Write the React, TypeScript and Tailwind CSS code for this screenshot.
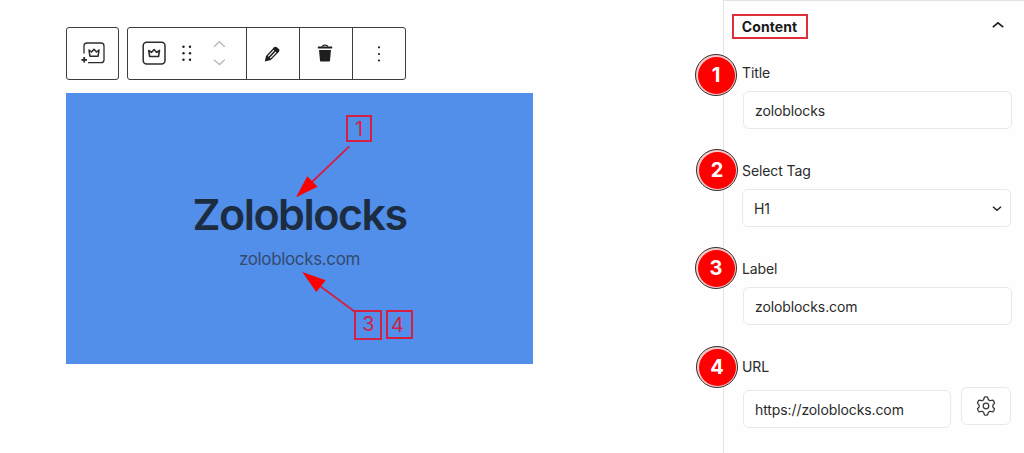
import React from 'react';

interface FieldProps {
  step: number;
  label: string;
  className?: string;
  badgeClassName?: string;
  children: React.ReactNode;
}

const Crown: React.FC = () => (
  <path d="M-5 -3 L-2.5 -1 L0 -3.8 L2.5 -1 L5 -3 L4.1 3.2 H-4.1 Z" strokeWidth="1.5" strokeLinejoin="round" />
);

const Field: React.FC<FieldProps> = ({ step, label, className = '', badgeClassName = '-left-[47px]', children }) => (
  <div className={`relative ${className}`}>
    <span
      className={`absolute -top-[9px] flex h-[42px] w-[42px] items-center justify-center rounded-full border border-[#3a2a2c] bg-[#f4c9c9] p-[1.5px] ${badgeClassName}`}
    >
      <span className="flex h-full w-full items-center justify-center rounded-full bg-[#fe0000] text-[20px] font-bold text-white">
        {step}
      </span>
    </span>
    <label className="block h-5 text-[14px] leading-5 tracking-[-0.1px] text-[#2b2b2b]">{label}</label>
    {children}
  </div>
);

const inputClass =
  'flex h-[38px] items-center rounded-md border border-[#e8e8ea] bg-white px-[11px] text-[14px] tracking-[-0.1px] text-[#2b2b2b]';

const Toolbar: React.FC = () => (
  <div className="flex gap-[8px]">
    <div className="flex h-[53px] w-[53px] items-center justify-center rounded-[3px] border border-[#3c3c3c]">
      <svg className="-mr-px mb-px" width="26" height="26" viewBox="0 0 26 26" fill="none" stroke="#2c2c2c" strokeWidth="1.3">
        <path d="M4 13.5 V6 a3 3 0 0 1 3-3 H21 a3 3 0 0 1 3 3 V19.7 a3 3 0 0 1-3 3 H8" />
        <path d="M4.2 17 V22.6 M1.4 19.8 H7" strokeWidth="1.8" />
        <g transform="translate(14 13)">
          <Crown />
        </g>
      </svg>
    </div>
    <div className="flex h-[53px] w-[279px] rounded-[3px] border border-[#3c3c3c]">
      <div className="w-[118px]">
        <svg width="118" height="51" viewBox="0 0 118 51" fill="none">
          <g stroke="#2c2c2c" strokeWidth="1.5">
            <rect x="15.2" y="14.3" width="21.8" height="21.8" rx="3.5" />
            <g transform="translate(26.1 25.4) scale(1.08 1)">
              <Crown />
            </g>
          </g>
          <g fill="#1e1e1e">
            {[18.7, 25.2, 31.7].map((y) => (
              <React.Fragment key={y}>
                <circle cx="55.5" cy={y} r="1.2" />
                <circle cx="62" cy={y} r="1.2" />
              </React.Fragment>
            ))}
          </g>
          <path d="M86 18.8 L91.4 13.8 L96.8 18.8 M86 31.7 L91.4 36.5 L96.8 31.7" stroke="#b9b9b9" strokeWidth="1.4" />
        </svg>
      </div>
      <div className="flex w-[53px] items-center justify-center border-l border-[#3c3c3c]">
        <svg className="mr-[2px]" width="18" height="18" viewBox="0 0 18 18">
          <path d="M1.8 16.4 L3 11 L10.8 2.4 Q12.3 1 13.9 2.2 L15.9 3.9 Q17.1 5.2 16 6.7 L7.8 15 Z" fill="#1e1e1e" />
          <path d="M5.2 11.4 L11 5.2 M7.2 13.2 L13 7" stroke="#fff" strokeWidth="1.1" />
        </svg>
      </div>
      <div className="flex w-[53px] items-center justify-center border-l border-[#3c3c3c]">
        <svg className="mr-[2px] mb-px" width="16" height="18" viewBox="0 0 16 18" fill="#1e1e1e">
          <path d="M5 2.8 a3.1 2.3 0 0 1 6 0" fill="none" stroke="#1e1e1e" strokeWidth="1.1" />
          <rect x="0.8" y="2.6" width="14.4" height="1.9" rx="0.5" />
          <path d="M2 5.9 H14 L13 16.4 Q12.8 17.6 11.6 17.6 H4.4 Q3.2 17.6 3 16.4 Z" />
        </svg>
      </div>
      <div className="flex flex-1 items-center justify-center border-l border-[#3c3c3c]">
        <svg width="4" height="18" viewBox="0 0 4 18" fill="#1e1e1e">
          <circle cx="2" cy="2.3" r="1.1" />
          <circle cx="2" cy="9" r="1.1" />
          <circle cx="2" cy="15.5" r="1.1" />
        </svg>
      </div>
    </div>
  </div>
);

const markerClass = 'absolute flex items-center justify-center border-2 border-[#d31f42] text-[20px] leading-none text-[#d31f42]';

const Preview: React.FC = () => (
  <div className="relative mt-[13px] flex h-[271px] w-[467px] flex-col items-center bg-[#528fea]">
    <h1 className="mt-[97px] text-[43px] leading-[48px] font-semibold tracking-[-1.5px] text-[#1c2d42]">Zoloblocks</h1>
    <p className="mt-[9px] text-[17px] leading-6 tracking-[-0.35px] text-[#344a70]">zoloblocks.com</p>

    <svg className="absolute inset-0" width="467" height="271" viewBox="0 0 467 271">
      <g stroke="#d31f42" strokeWidth="1.8">
        <path d="M283.3 53.3 L246 89" />
        <path d="M288.5 218.5 L254 193" />
      </g>
      <g fill="#fe0000">
        <path d="M230 104.2 L241.3 83.3 L251.6 93.8 Z" />
        <path d="M236.3 179 L259.6 187.3 L250.3 199 Z" />
      </g>
    </svg>
    <span className={`${markerClass} top-[22px] left-[280px] h-[27px] w-[26px]`}>1</span>
    <span className={`${markerClass} top-[217px] left-[288px] h-[30px] w-[28px] pb-[2px] pl-px`}>3</span>
    <span className={`${markerClass} top-[217px] left-[320px] h-[29px] w-[27px] pr-[4px]`}>4</span>
  </div>
);

const Sidebar: React.FC = () => (
  <aside className="w-[301px] border-t border-l border-[#e2e2e2] bg-[#fefefe] pr-3 pl-[18px]">
    <div className="mt-[13px] -ml-[10px] flex items-center justify-between pr-[7px]">
      <h2 className="flex h-[25px] w-[76px] items-center justify-center border-2 border-[#dc2f38] text-[14px] font-bold text-[#1a1a1a]">
        <span className="-ml-px tracking-[0.1px]">Content</span>
      </h2>
      <svg className="mb-[3px]" width="13" height="8" viewBox="0 0 13 8" fill="none" stroke="#1e1e1e" strokeWidth="1.7">
        <path d="M0.8 6.2 L6 1.8 L11.2 6.2" />
      </svg>
    </div>

    <Field step={1} label="Title" className="mt-6">
      <div className={`${inputClass} mt-2 ml-px`}>zoloblocks</div>
    </Field>

    <Field step={2} label="Select Tag" className="mt-8" badgeClassName="-left-[46px] mt-[-3px]">
      <div className={`${inputClass} mt-2 mr-px justify-between`}>
        H1
        <svg className="-mr-[3px]" width="10" height="7" viewBox="0 0 10 7" fill="none" stroke="#1e1e1e" strokeWidth="1.4">
          <path d="M1 1.8 L5 5.3 L9 1.8" />
        </svg>
      </div>
    </Field>

    <Field step={3} label="Label" className="mt-8" badgeClassName="-left-[47px] mt-[-3px]">
      <div className={`${inputClass} mt-2 ml-px`}>zoloblocks.com</div>
    </Field>

    <Field step={4} label="URL" className="mt-8" badgeClassName="-left-[46px] mt-[-2px]">
      <div className="mt-[10px] mr-px ml-px flex items-start gap-[10px]">
        <div className={`${inputClass} mt-[3px] w-[208px]`}>https://zoloblocks.com</div>
        <div className="flex h-[38px] flex-1 items-center justify-center rounded-md border border-[#e8e8ea] bg-white">
          <svg width="20" height="20" viewBox="0 0 20 20" fill="none" stroke="#3a3a3a" strokeWidth="1.3" strokeLinejoin="round">
            <path d="M8.4 1.2 Q10 0.6 11.6 1.2 Q12 3.8 13.3 4.5 Q14.6 4.8 17 4.2 Q18.3 5.4 18.5 7.2 Q16.7 8.7 16.7 10 Q16.7 11.3 18.5 12.8 Q18.3 14.6 17 15.8 Q14.6 15.2 13.3 15.5 Q12 16.2 11.6 18.8 Q10 19.4 8.4 18.8 Q8 16.2 6.7 15.5 Q5.4 15.2 3 15.8 Q1.7 14.6 1.5 12.8 Q3.3 11.3 3.3 10 Q3.3 8.7 1.5 7.2 Q1.7 5.4 3 4.2 Q5.4 4.8 6.7 4.5 Q8 3.8 8.4 1.2 Z" />
            <circle cx="10" cy="10" r="2.8" />
          </svg>
        </div>
      </div>
    </Field>
  </aside>
);

export default function App() {
  return (
    <div className="flex h-[453px] w-[1024px] overflow-hidden bg-[#fefefe] font-['Inter',sans-serif]">
      <main className="w-[723px] pt-[27px] pl-[66px]">
        <Toolbar />
        <Preview />
      </main>
      <Sidebar />
    </div>
  );
}
